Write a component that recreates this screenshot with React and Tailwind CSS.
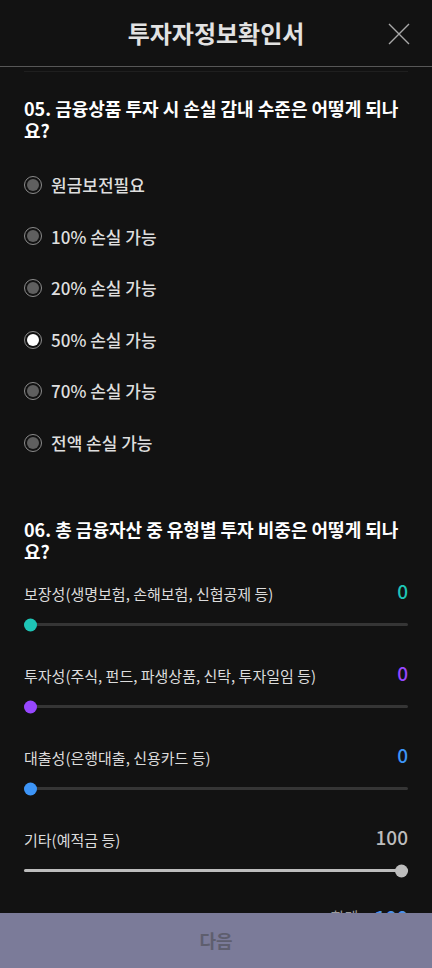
import React from "react";

const options = ["원금보전필요", "10% 손실 가능", "20% 손실 가능", "50% 손실 가능", "70% 손실 가능", "전액 손실 가능"];

const sliders = [
  { label: "보장성(생명보험, 손해보험, 신협공제 등)", value: 0, color: "#1ec5b6", fill: "#1ec5b6" },
  { label: "투자성(주식, 펀드, 파생상품, 신탁, 투자일임 등)", value: 0, color: "#9747ff", fill: "#9747ff" },
  { label: "대출성(은행대출, 신용카드 등)", value: 0, color: "#3d95f7", fill: "#3d95f7" },
  { label: "기타(예적금 등)", value: 100, color: "#bdbdbd", fill: "#bdbdbd" },
];

function Radio({ checked }) {
  return (
    <span className="flex h-[18px] w-[18px] items-center justify-center rounded-full border border-[#8c8c8c]">
      <span className={"h-[12px] w-[12px] rounded-full " + (checked ? "bg-white" : "bg-[#5f5f5f]")} />
    </span>
  );
}

function Slider({ label, value, color, fill }) {
  const pct = value;
  return (
    <div className="flex flex-col">
      <div className="flex h-[22px] items-center justify-between">
        <span className="text-[15px] text-[#dcdcdc]">{label}</span>
        <span className="-mt-[6px] text-[19px] font-medium" style={{ color }}>{value}</span>
      </div>
      <div className="relative mt-[13px] h-[12px]">
        <div className="absolute left-0 right-0 top-[4.5px] h-[3px] rounded-full bg-[#353535]" />
        <div className="absolute left-0 top-[4.5px] h-[3px] rounded-full" style={{ width: pct + "%", background: fill }} />
        <div
          className="absolute top-1/2 h-[13px] w-[13px] -translate-y-1/2 rounded-full"
          style={{ left: `calc(${pct}% - ${pct === 100 ? 13 : 0}px)`, background: fill }}
        />
      </div>
    </div>
  );
}

export default function App() {
  return (
    <div
      className="relative h-[968px] w-[432px] overflow-hidden bg-[#121212] text-white"
      style={{ fontFamily: '"Noto Sans CJK KR", "Noto Sans", sans-serif' }}
    >
      <header className="relative flex h-[67px] items-center justify-center border-b border-[#575757]">
        <h1 className="text-[24px] font-bold text-[#e2e2e2]">투자자정보확인서</h1>
        <svg className="absolute right-[22px] top-[23px]" width="22" height="22" viewBox="0 0 22 22">
          <path d="M1 1 L21 21 M21 1 L1 21" stroke="#a8a8a8" strokeWidth="1.4" fill="none" />
        </svg>
      </header>
      <div className="mx-6 mt-[4px] h-px bg-[#1f1f1f]" />

      <div className="px-6">
        <h2 className="mt-[25px] text-[18px] font-bold leading-[22px] text-white">
          05. 금융상품 투자 시 손실 감내 수준은 어떻게 되나요?
        </h2>
        <div className="mt-[18px] flex flex-col">
          {options.map((o, i) => (
            <label key={o} className="flex h-[51.6px] items-center gap-[9px]">
              <Radio checked={i === 3} />
              <span className="text-[17px] font-medium text-[#dedede]">{o}</span>
            </label>
          ))}
        </div>

        <h2 className="mt-[49px] text-[18px] font-bold leading-[22px] text-white">
          06. 총 금융자산 중 유형별 투자 비중은 어떻게 되나요?
        </h2>
        <div className="mt-[22px] flex flex-col gap-[35px]">
          {sliders.map((s) => (
            <Slider key={s.label} {...s} />
          ))}
        </div>
        <div className="mt-[26px] flex items-center justify-end gap-4">
          <span className="text-[15px] text-[#9a9a9a]">합계</span>
          <span className="text-[19px] font-bold text-[#4a8fe8]">100</span>
        </div>
      </div>

      <button className="absolute bottom-0 left-0 flex h-[55px] w-full items-center justify-center bg-[#7b7b99] text-[18px] font-bold text-[#5e5e6e]">
        다음
      </button>
    </div>
  );
}
